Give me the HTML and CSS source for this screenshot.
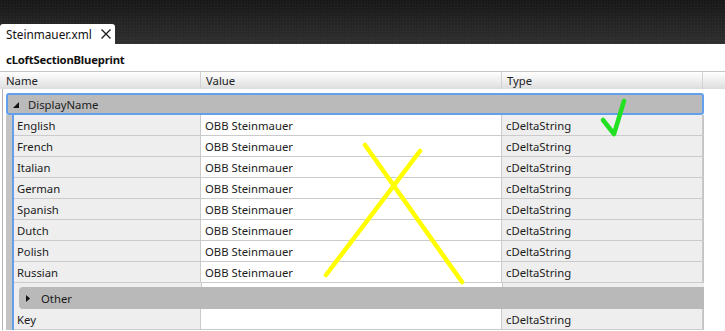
FILE: index.html
```html
<!DOCTYPE html>
<html lang="en">
  <head>
    <meta charset="UTF-8" />
    <title>Steinmauer.xml</title>
    <link rel="stylesheet" href="styles.css">
  </head>
  <body>
    <div class="topbar">
      <div class="tab">
        <span class="tab-name">Steinmauer.xml</span>
        <svg class="tab-close" width="10" height="10" viewBox="0 0 10 10">
          <path d="M0.5 0.5 L9.5 9.5 M9.5 0.5 L0.5 9.5" stroke="#1a1a1a" stroke-width="1.3" />
        </svg>
      </div>
    </div>

    <div class="doc">
      <div class="title">cLoftSectionBlueprint</div>

      <div class="grid">
        <!-- column headers -->
        <div class="header">
          <div class="hcell c-name">Name</div>
          <div class="hcell c-value">Value</div>
          <div class="hcell c-type">Type</div>
          <div class="hcell c-fill"></div>
        </div>

        <div class="rows">
          <div class="group">
            <div class="group-head">
              <svg class="arrow-open" width="6" height="6" viewBox="0 0 6 6"><polygon points="6,0 6,6 0,6" fill="#111"/></svg>
              <span>DisplayName</span>
            </div>
            <div class="group-items">
              <div class="items">
                <div class="row"><div class="cell n">English</div><div class="cell v">OBB Steinmauer</div><div class="cell t">cDeltaString</div></div>
                <div class="row"><div class="cell n">French</div><div class="cell v">OBB Steinmauer</div><div class="cell t">cDeltaString</div></div>
                <div class="row"><div class="cell n">Italian</div><div class="cell v">OBB Steinmauer</div><div class="cell t">cDeltaString</div></div>
                <div class="row"><div class="cell n">German</div><div class="cell v">OBB Steinmauer</div><div class="cell t">cDeltaString</div></div>
                <div class="row"><div class="cell n">Spanish</div><div class="cell v">OBB Steinmauer</div><div class="cell t">cDeltaString</div></div>
                <div class="row"><div class="cell n">Dutch</div><div class="cell v">OBB Steinmauer</div><div class="cell t">cDeltaString</div></div>
                <div class="row"><div class="cell n">Polish</div><div class="cell v">OBB Steinmauer</div><div class="cell t">cDeltaString</div></div>
                <div class="row"><div class="cell n">Russian</div><div class="cell v">OBB Steinmauer</div><div class="cell t">cDeltaString</div></div>

                <div class="other-row">
                  <div class="other">
                    <svg class="arrow-closed" width="4" height="7" viewBox="0 0 4 7"><polygon points="0,0 4,3.5 0,7" fill="#111"/></svg>
                    <span>Other</span>
                  </div>
                </div>

                <div class="row"><div class="cell n">Key</div><div class="cell v"></div><div class="cell t">cDeltaString</div></div>
              </div>
            </div>
          </div>
        </div>
      </div>
    </div>

    <!-- marks drawn over the screenshot -->
    <svg class="marks" width="725" height="331" viewBox="0 0 725 331">
      <g stroke="#ffff00" stroke-width="4.5" stroke-linecap="round">
        <line x1="365" y1="145" x2="462" y2="282" />
        <line x1="420" y1="151" x2="326" y2="275" />
      </g>
      <polyline points="603,120 614,134 624,101" fill="none" stroke="#22e022" stroke-width="4.5" stroke-linecap="round" stroke-linejoin="round" />
    </svg>
  </body>
</html>
```

FILE: styles.css
```css
* {
  margin: 0;
  padding: 0;
  box-sizing: border-box;
}

body {
  width: 725px;
  height: 331px;
  overflow: hidden;
  position: relative;
  background: #ffffff;
  font-family: "Noto Sans", "Open Sans", sans-serif;
  font-size: 11.3px;
  color: #1c1c1c;
}

.topbar {
  height: 44px;
  display: flex;
  align-items: flex-end;
  background-color: #262626;
  background-image: radial-gradient(rgba(255, 255, 255, 0.05) 0.6px, transparent 0.8px),
    linear-gradient(#181818, #303030);
  background-size: 3px 3px, 100% 100%;
}

.tab {
  width: 115px;
  height: 20px;
  background: #ffffff;
  border-radius: 3px 3px 0 0;
  display: flex;
  align-items: center;
  padding-left: 6px;
  font-size: 11.8px;
  color: #111;
}

.tab-close {
  margin-left: 9px;
}

.title {
  height: 27px;
  padding: 8px 0 0 6px;
  font-weight: bold;
  color: #111;
  line-height: 16px;
  letter-spacing: -0.2px;
}

.header {
  display: flex;
  height: 18px;
  border-top: 1px solid #c6c6c6;
  background: linear-gradient(#ffffff, #e6e6e6 75%, #dcdcdc);
}

.hcell {
  height: 17px;
  line-height: 17px;
  border-right: 1px solid #d2d2d2;
  padding-left: 5px;
  color: #222;
}

.c-name { width: 201px; padding-left: 6px; }
.c-value { width: 301px; }
.c-type { width: 201px; }
.c-fill { flex: 1; border-right: none; }

.rows {
  margin-left: 2px;
  padding-top: 4px;
  border-left: 1px solid #b4b4b4;
}

.group {
  margin-left: 3px;
  width: 698px;
}

.group-head {
  height: 22px;
  border: 2px solid #62a0ec;
  border-radius: 3px;
  background: #bababa;
  display: flex;
  align-items: center;
  padding-left: 5px;
}

.arrow-open {
  margin-right: 9px;
  margin-top: 2px;
}

.group-items {
  background: #c4c4c4;
  padding-left: 6px;
}

.items {
  border-left: 2px solid #62a0ec;
}

.row {
  display: flex;
  height: 21px;
  border-bottom: 1px solid #cbcbcb;
}

.cell {
  line-height: 21px;
  white-space: nowrap;
}

.n {
  width: 187px;
  background: #eeeeee;
  padding-left: 3px;
  border-right: 1px solid #cbcbcb;
}

.v {
  width: 301px;
  background: #ffffff;
  padding-left: 4px;
  border-right: 1px solid #cbcbcb;
}

.t {
  width: 201px;
  background: #eeeeee;
  padding-left: 4px;
  border-right: 1px solid #cbcbcb;
}

.other-row {
  height: 26px;
  padding: 4px 0 0 5px;
  background: linear-gradient(to right, #eeeeee 0 187px, #cbcbcb 187px 188px, #ffffff 188px 488px,
    #cbcbcb 488px 489px, #eeeeee 489px);
}

.other {
  height: 22px;
  background: #b9b9b9;
  border-radius: 4px 0 0 4px;
  display: flex;
  align-items: center;
  padding-left: 7px;
}

.arrow-closed {
  margin-right: 11px;
}

.marks {
  position: absolute;
  left: 0;
  top: 0;
  pointer-events: none;
}
```
